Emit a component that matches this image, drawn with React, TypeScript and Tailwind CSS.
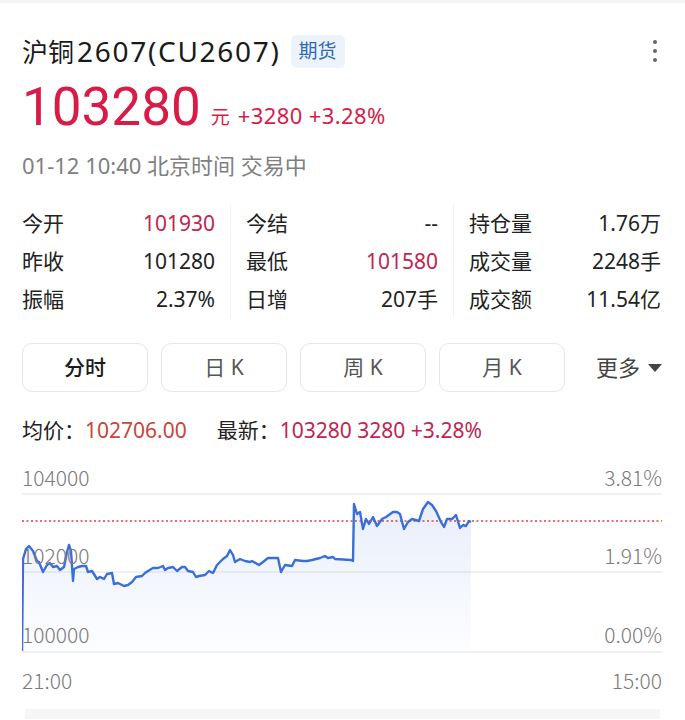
import React from 'react';

const RED = 'text-[#d91c47]';

// price points in page coordinates, converted to chart space below
const RAW: [number, number][] = [
  [22, 652], [23, 560], [26, 550], [29, 547], [33, 552], [37, 562], [39, 563], [43, 573], [47, 566],
  [50, 564], [53, 568], [57, 567], [60, 571], [64, 568], [67, 553], [69, 546], [71, 552], [73, 582],
  [74, 570], [78, 568], [82, 567], [86, 567], [88, 573], [92, 572], [97, 580], [100, 578], [104, 580],
  [107, 575], [112, 574], [114, 585], [118, 584], [124, 587], [128, 586], [132, 583], [136, 578],
  [142, 577], [145, 574], [148, 572], [153, 569], [158, 569], [163, 567], [165, 571], [168, 569],
  [173, 568], [177, 572], [182, 568], [185, 568], [188, 572], [193, 573], [196, 578], [199, 577],
  [205, 576], [209, 572], [213, 574], [217, 566], [223, 560], [227, 557], [230, 551], [233, 556],
  [235, 563], [240, 560], [245, 562], [250, 563], [252, 562], [259, 566], [263, 563], [268, 559],
  [278, 559], [281, 573], [285, 566], [292, 567], [295, 561], [303, 562], [307, 562], [312, 561],
  [320, 559], [325, 557], [328, 559], [333, 558], [335, 560], [351, 561], [353, 562], [354, 505],
  [357, 515], [360, 513], [363, 530], [366, 520], [369, 525], [373, 518], [377, 527], [382, 520],
  [386, 518], [393, 513], [397, 513], [400, 515], [404, 530], [408, 523], [412, 520], [419, 522],
  [423, 510], [428, 503], [432, 506], [436, 512], [441, 523], [444, 528], [447, 520], [452, 520],
  [456, 516], [460, 529], [463, 526], [466, 527], [469, 522], [471, 523],
];

const TOP = 465;
const PTS = RAW.map(([x, y]) => [x - 22, y - TOP] as [number, number]);
const LINE = PTS.map(([x, y], i) => `${i ? 'L' : 'M'}${x} ${y}`).join(' ');
const AREA = `${LINE} L${PTS[PTS.length - 1][0]} 188 L0 188 Z`;

function Stat({ label, value, red }: { label: string; value: string; red?: boolean }) {
  return (
    <div className="flex items-center justify-between h-[38px]">
      <span className="text-[#222]">{label}</span>
      <span className={red ? 'text-[#c2244f]' : 'text-[#222]'}>{value}</span>
    </div>
  );
}

function Tab({ label, active }: { label: string; active?: boolean }) {
  return (
    <div
      className={`w-[126px] h-[49px] rounded-[10px] border border-[#e6e6e6] flex items-center justify-center text-[21px] ${
        active ? 'text-[#1a1a1a] font-medium' : 'text-[#555]'
      }`}
    >
      {label}
    </div>
  );
}

function Chart() {
  const label = 'absolute text-[21px] leading-none text-[#7a7a7a] font-light';
  return (
    <div className="relative h-[195px] w-[640px]" style={{ fontFamily: '"Noto Sans CJK SC", sans-serif' }}>
      <svg width="640" height="195" className="absolute inset-0">
        <defs>
          <linearGradient id="fill" x1="0" y1="0" x2="0" y2="1">
            <stop offset="0%" stopColor="#3b6fd8" stopOpacity="0.12" />
            <stop offset="100%" stopColor="#3b6fd8" stopOpacity="0.01" />
          </linearGradient>
        </defs>
        <line x1="0" y1="30" x2="640" y2="30" stroke="#ececec" strokeWidth="1.5" />
        <line x1="0" y1="108" x2="640" y2="108" stroke="#ececec" strokeWidth="1.5" />
        <line x1="0" y1="188" x2="640" y2="188" stroke="#ececec" strokeWidth="1.5" />
        <path d={AREA} fill="url(#fill)" />
        <line x1="0" y1="57" x2="640" y2="57" stroke="#d0483c" strokeWidth="1.3" strokeDasharray="2 2.5" />
        <path d={LINE} fill="none" stroke="#3a6fdb" strokeWidth="2.4" strokeLinejoin="round" />
      </svg>
      <span className={`${label} left-0 top-[3px]`}>104000</span>
      <span className={`${label} right-0 top-[3px]`}>3.81%</span>
      <span className={`${label} left-0 top-[81px]`}>102000</span>
      <span className={`${label} right-0 top-[81px]`}>1.91%</span>
      <span className={`${label} left-0 top-[160px]`}>100000</span>
      <span className={`${label} right-0 top-[160px]`}>0.00%</span>
    </div>
  );
}

export default function App() {
  return (
    <div className="w-[685px] h-[720px] bg-white overflow-hidden" style={{ fontFamily: '"Noto Sans", "Noto Sans CJK SC", sans-serif' }}>
      <div className="h-[3px] bg-[#f4f4f4]" />

      <div className="pl-[22px] pr-[23px]">
        {/* Title */}
        <div className="flex items-center justify-between mt-[30px] h-[36px]">
          <div className="flex items-center gap-[10px]">
            <h1 className="text-[26px] leading-none text-[#1a1a1a]">
              沪铜<span className="text-[28px] ml-[3px] tracking-[1.7px]">2607(CU2607)</span>
            </h1>
            <span className="px-[8px] h-[33px] flex items-center rounded-[6px] bg-[#edf3fb] text-[#2b6cb5] text-[19px]">期货</span>
          </div>
          <div className="flex flex-col gap-[5px] items-center w-[6px] mr-[4px]">
            <span className="w-[4px] h-[4px] rounded-full bg-[#666]" />
            <span className="w-[4px] h-[4px] rounded-full bg-[#666]" />
            <span className="w-[4px] h-[4px] rounded-full bg-[#666]" />
          </div>
        </div>

        {/* Price */}
        <div className={`flex items-end mt-[10px] ${RED}`}>
          <span className="text-[53px] leading-[56px]" style={{ fontFamily: 'Roboto, sans-serif' }}>103280</span>
          <span className="text-[19px] ml-[10px] mb-[4px]">元</span>
          <span className="text-[22px] ml-[8px] mb-[3px] tracking-[0.4px]">+3280 +3.28%</span>
        </div>

        <div className="mt-[19px] text-[22px] leading-none text-[#808080]">01-12 10:40 北京时间 交易中</div>

        {/* Stats */}
        <div className="mt-[28px] flex text-[21px] leading-none">
          <div className="w-[193px]">
            <Stat label="今开" value="101930" red />
            <Stat label="昨收" value="101280" />
            <Stat label="振幅" value="2.37%" />
          </div>
          <div className="w-px bg-[#f3f3f3] mx-[15px]" />
          <div className="w-[192px]">
            <Stat label="今结" value="--" />
            <Stat label="最低" value="101580" red />
            <Stat label="日增" value="207手" />
          </div>
          <div className="w-px bg-[#f3f3f3] mx-[15px]" />
          <div className="w-[192px]">
            <Stat label="持仓量" value="1.76万" />
            <Stat label="成交量" value="2248手" />
            <Stat label="成交额" value="11.54亿" />
          </div>
        </div>

        {/* Tabs */}
        <div className="mt-[25px] flex items-center gap-[13px]">
          <Tab label="分时" active />
          <Tab label="日 K" />
          <Tab label="周 K" />
          <Tab label="月 K" />
          <div className="ml-auto flex items-center gap-[8px] text-[22px] text-[#444]">
            更多
            <svg width="14" height="10" viewBox="0 0 14 10">
              <path d="M0 1 L14 1 L7 9 Z" fill="#444" />
            </svg>
          </div>
        </div>

        <div className="mt-[28px] text-[21px] leading-none flex">
          <span className="text-[#222]">均价：</span>
          <span className="text-[#c9453a]">102706.00</span>
          <span className="text-[#222] ml-[30px]">最新：</span>
          <span className="text-[#c2244f]">103280 3280 +3.28%</span>
        </div>

        <div className="mt-[23px]">
          <Chart />
        </div>

        <div className="mt-[11px] flex justify-between text-[21px] leading-none text-[#7a7a7a] font-light" style={{ fontFamily: '"Noto Sans CJK SC", sans-serif' }}>
          <span>21:00</span>
          <span>15:00</span>
        </div>
      </div>

      <div className="mx-[25px] mt-[18px] h-[10px] bg-[#f6f6f6]" />
    </div>
  );
}
